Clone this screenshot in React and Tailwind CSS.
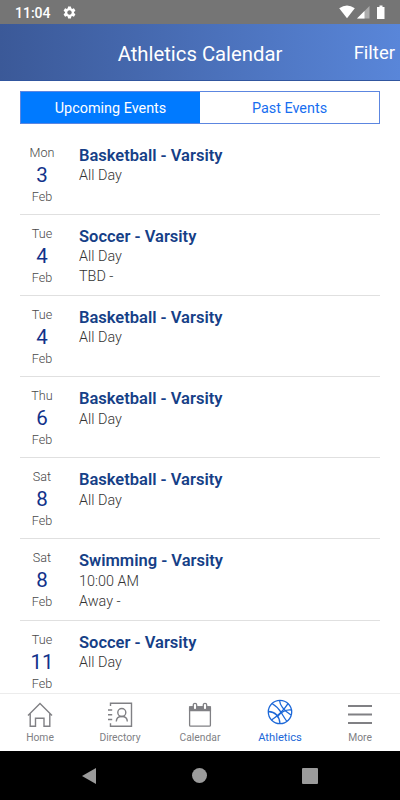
import { useState } from "react";
import { MdSettings } from "react-icons/md";

const events = [
  { day: "Mon", date: 3, month: "Feb", title: "Basketball - Varsity", time: "All Day" },
  { day: "Tue", date: 4, month: "Feb", title: "Soccer - Varsity", time: "All Day", place: "TBD -" },
  { day: "Tue", date: 4, month: "Feb", title: "Basketball - Varsity", time: "All Day" },
  { day: "Thu", date: 6, month: "Feb", title: "Basketball - Varsity", time: "All Day" },
  { day: "Sat", date: 8, month: "Feb", title: "Basketball - Varsity", time: "All Day" },
  { day: "Sat", date: 8, month: "Feb", title: "Swimming - Varsity", time: "10:00 AM", place: "Away -" },
  { day: "Tue", date: 11, month: "Feb", title: "Soccer - Varsity", time: "All Day" },
];

function HomeIcon() {
  return (
    <svg width="26" height="26" viewBox="0 0 26 26" fill="none" stroke="currentColor" strokeWidth="1.4">
      <path d="M1 13.5 13 1.5l12 12M3.2 11.5v12.7h5.3v-8h8.5v8h5.8V11.5" />
    </svg>
  );
}

function DirectoryIcon() {
  return (
    <svg width="26" height="26" viewBox="0 0 26 26" fill="none" stroke="currentColor" strokeWidth="1.4">
      <path d="M3.5 4V1.3h21v22.9h-21v-3M1 8h4.2M1 12.7h4.2M1 17.5h4.2" />
      <circle cx="14.8" cy="10.5" r="4" />
      <path d="M9.3 19.5c0-3.2 2-5 5.5-5s5.5 1.8 5.5 5" />
    </svg>
  );
}

function CalendarIcon() {
  return (
    <svg width="26" height="26" viewBox="0 0 26 26" fill="none" stroke="currentColor" strokeWidth="1.3">
      <path d="M2.6 4.8h20.8v3.8H2.6z" fill="currentColor" />
      <rect x="2.6" y="4.8" width="20.8" height="19.4" rx="1" />
      <rect x="6.3" y="1.3" width="3.4" height="6.5" rx="1.7" fill="#fff" />
      <rect x="16.3" y="1.3" width="3.4" height="6.5" rx="1.7" fill="#fff" />
    </svg>
  );
}

function BasketballIcon() {
  return (
    <svg width="26" height="26" viewBox="0 0 26 26" fill="none" stroke="currentColor" strokeWidth="1.3">
      <circle cx="13" cy="13" r="11.7" />
      <path d="M4.5 21Q15 14 21 4.6" />
      <path d="M5 4.5Q11 8 14.5 14T20 22.5" />
      <path d="M12.5 1.3Q13 9 24 16" />
      <path d="M1.3 12.5Q12 13 13 24.6" />
      <path d="M11 17Q17 10 24.6 11" />
    </svg>
  );
}

function MenuIcon() {
  return (
    <svg width="26" height="26" viewBox="0 0 26 26" stroke="currentColor" strokeWidth="1.8">
      <path d="M1 4h24M1 12.5h24M1 21h24" />
    </svg>
  );
}

const navItems = [
  { label: "Home", Icon: HomeIcon },
  { label: "Directory", Icon: DirectoryIcon },
  { label: "Calendar", Icon: CalendarIcon },
  { label: "Athletics", Icon: BasketballIcon, active: true },
  { label: "More", Icon: MenuIcon },
];

function StatusBar() {
  return (
    <div className="h-6 shrink-0 bg-[#757575] text-white flex items-center pl-[15px] pr-[14px]">
      <span className="text-[14px] leading-6 font-medium pt-px">11:04</span>
      <MdSettings className="ml-[11px] mt-px size-[15px]" />
      <svg className="ml-auto" width="48" height="24" viewBox="0 0 48 24" fill="#fff">
        <path d="M1.2 8.3Q9 2.7 16.8 8.3L9 18.2z" />
        <path d="M31.5 6v12.5H19z" opacity=".4" />
        <path d="M26.5 11v7.5H19z" />
        <path d="M41.5 5.5h3V7h2v12h-7.5V7h2.5z" />
      </svg>
    </div>
  );
}

function EventRow({ event }) {
  return (
    <div className="mx-5 h-[81.2px] shrink-0 flex border-b border-[#e0e0e0]">
      <div className="w-11 pt-[9px] flex flex-col items-center text-[12.6px] font-light text-[#484848]">
        <span className="leading-5">{event.day}</span>
        <span className="text-[20.5px] leading-6 font-normal text-[#11318a]">{event.date}</span>
        <span className="leading-5">{event.month}</span>
      </div>
      <div className="pl-[15px] pt-[12px] text-[14.4px] leading-[19.5px] font-light text-[#333]">
        <h2 className="mb-[0.6px] text-[16.5px] leading-5 font-semibold text-[#163f87]">{event.title}</h2>
        <p>{event.time}</p>
        {event.place && <p>{event.place}</p>}
      </div>
    </div>
  );
}

export default function App() {
  const [tab, setTab] = useState("upcoming");

  const tabClass = (name) =>
    `flex-1 pt-[2px] text-[14.4px] ${tab === name ? "bg-[#007aff] text-white" : "bg-white text-[#176ef0]"}`;

  return (
    <div className="w-[400px] h-[800px] flex flex-col overflow-hidden bg-white font-['Roboto',sans-serif]">
      <StatusBar />

      <header className="h-[57px] shrink-0 grid grid-cols-[1fr_auto_1fr] items-center pt-[4px] bg-linear-to-r from-[#3b5998] to-[#5986d9] border-b border-[#31569f] text-white">
        <span />
        <h1 className="text-[20.3px]">Athletics Calendar</h1>
        <button className="text-[18.5px] text-right pr-[5px]">Filter</button>
      </header>

      {/* Tabs */}
      <div className="mx-5 mt-[10px] h-[33px] shrink-0 flex border border-[#5c86e0]">
        <button className={tabClass("upcoming")} onClick={() => setTab("upcoming")}>
          Upcoming Events
        </button>
        <button className={tabClass("past")} onClick={() => setTab("past")}>
          Past Events
        </button>
      </div>

      {/* Event list */}
      <main className="flex-1 min-h-0 overflow-hidden flex flex-col pt-[9.5px]">
        {events.map((event, i) => (
          <EventRow key={i} event={event} />
        ))}
      </main>

      <nav className="h-[58px] shrink-0 grid grid-cols-5 border-t border-[#ececec] bg-white">
        {navItems.map(({ label, Icon, active }) => (
          <button
            key={label}
            className={`flex flex-col items-center text-[10.3px] ${active ? "pt-[5px] text-[#1c68d8]" : "pt-[8px] text-[#808084]"}`}
          >
            <Icon />
            <span className={`leading-4 ${active ? "mt-[5px] text-[11.2px]" : "mt-[2px]"}`}>{label}</span>
          </button>
        ))}
      </nav>

      {/* Android buttons */}
      <div className="h-[49px] shrink-0 bg-black flex items-center justify-around px-[34px]">
        <svg className="-ml-px" width="16" height="18" viewBox="0 0 16 18" fill="#9b9b9b">
          <path d="M15 1v16L1 9z" />
        </svg>
        <div className="size-[15px] rounded-full bg-[#9b9b9b]" />
        <div className="size-4 rounded-[1px] bg-[#9b9b9b]" />
      </div>
    </div>
  );
}
